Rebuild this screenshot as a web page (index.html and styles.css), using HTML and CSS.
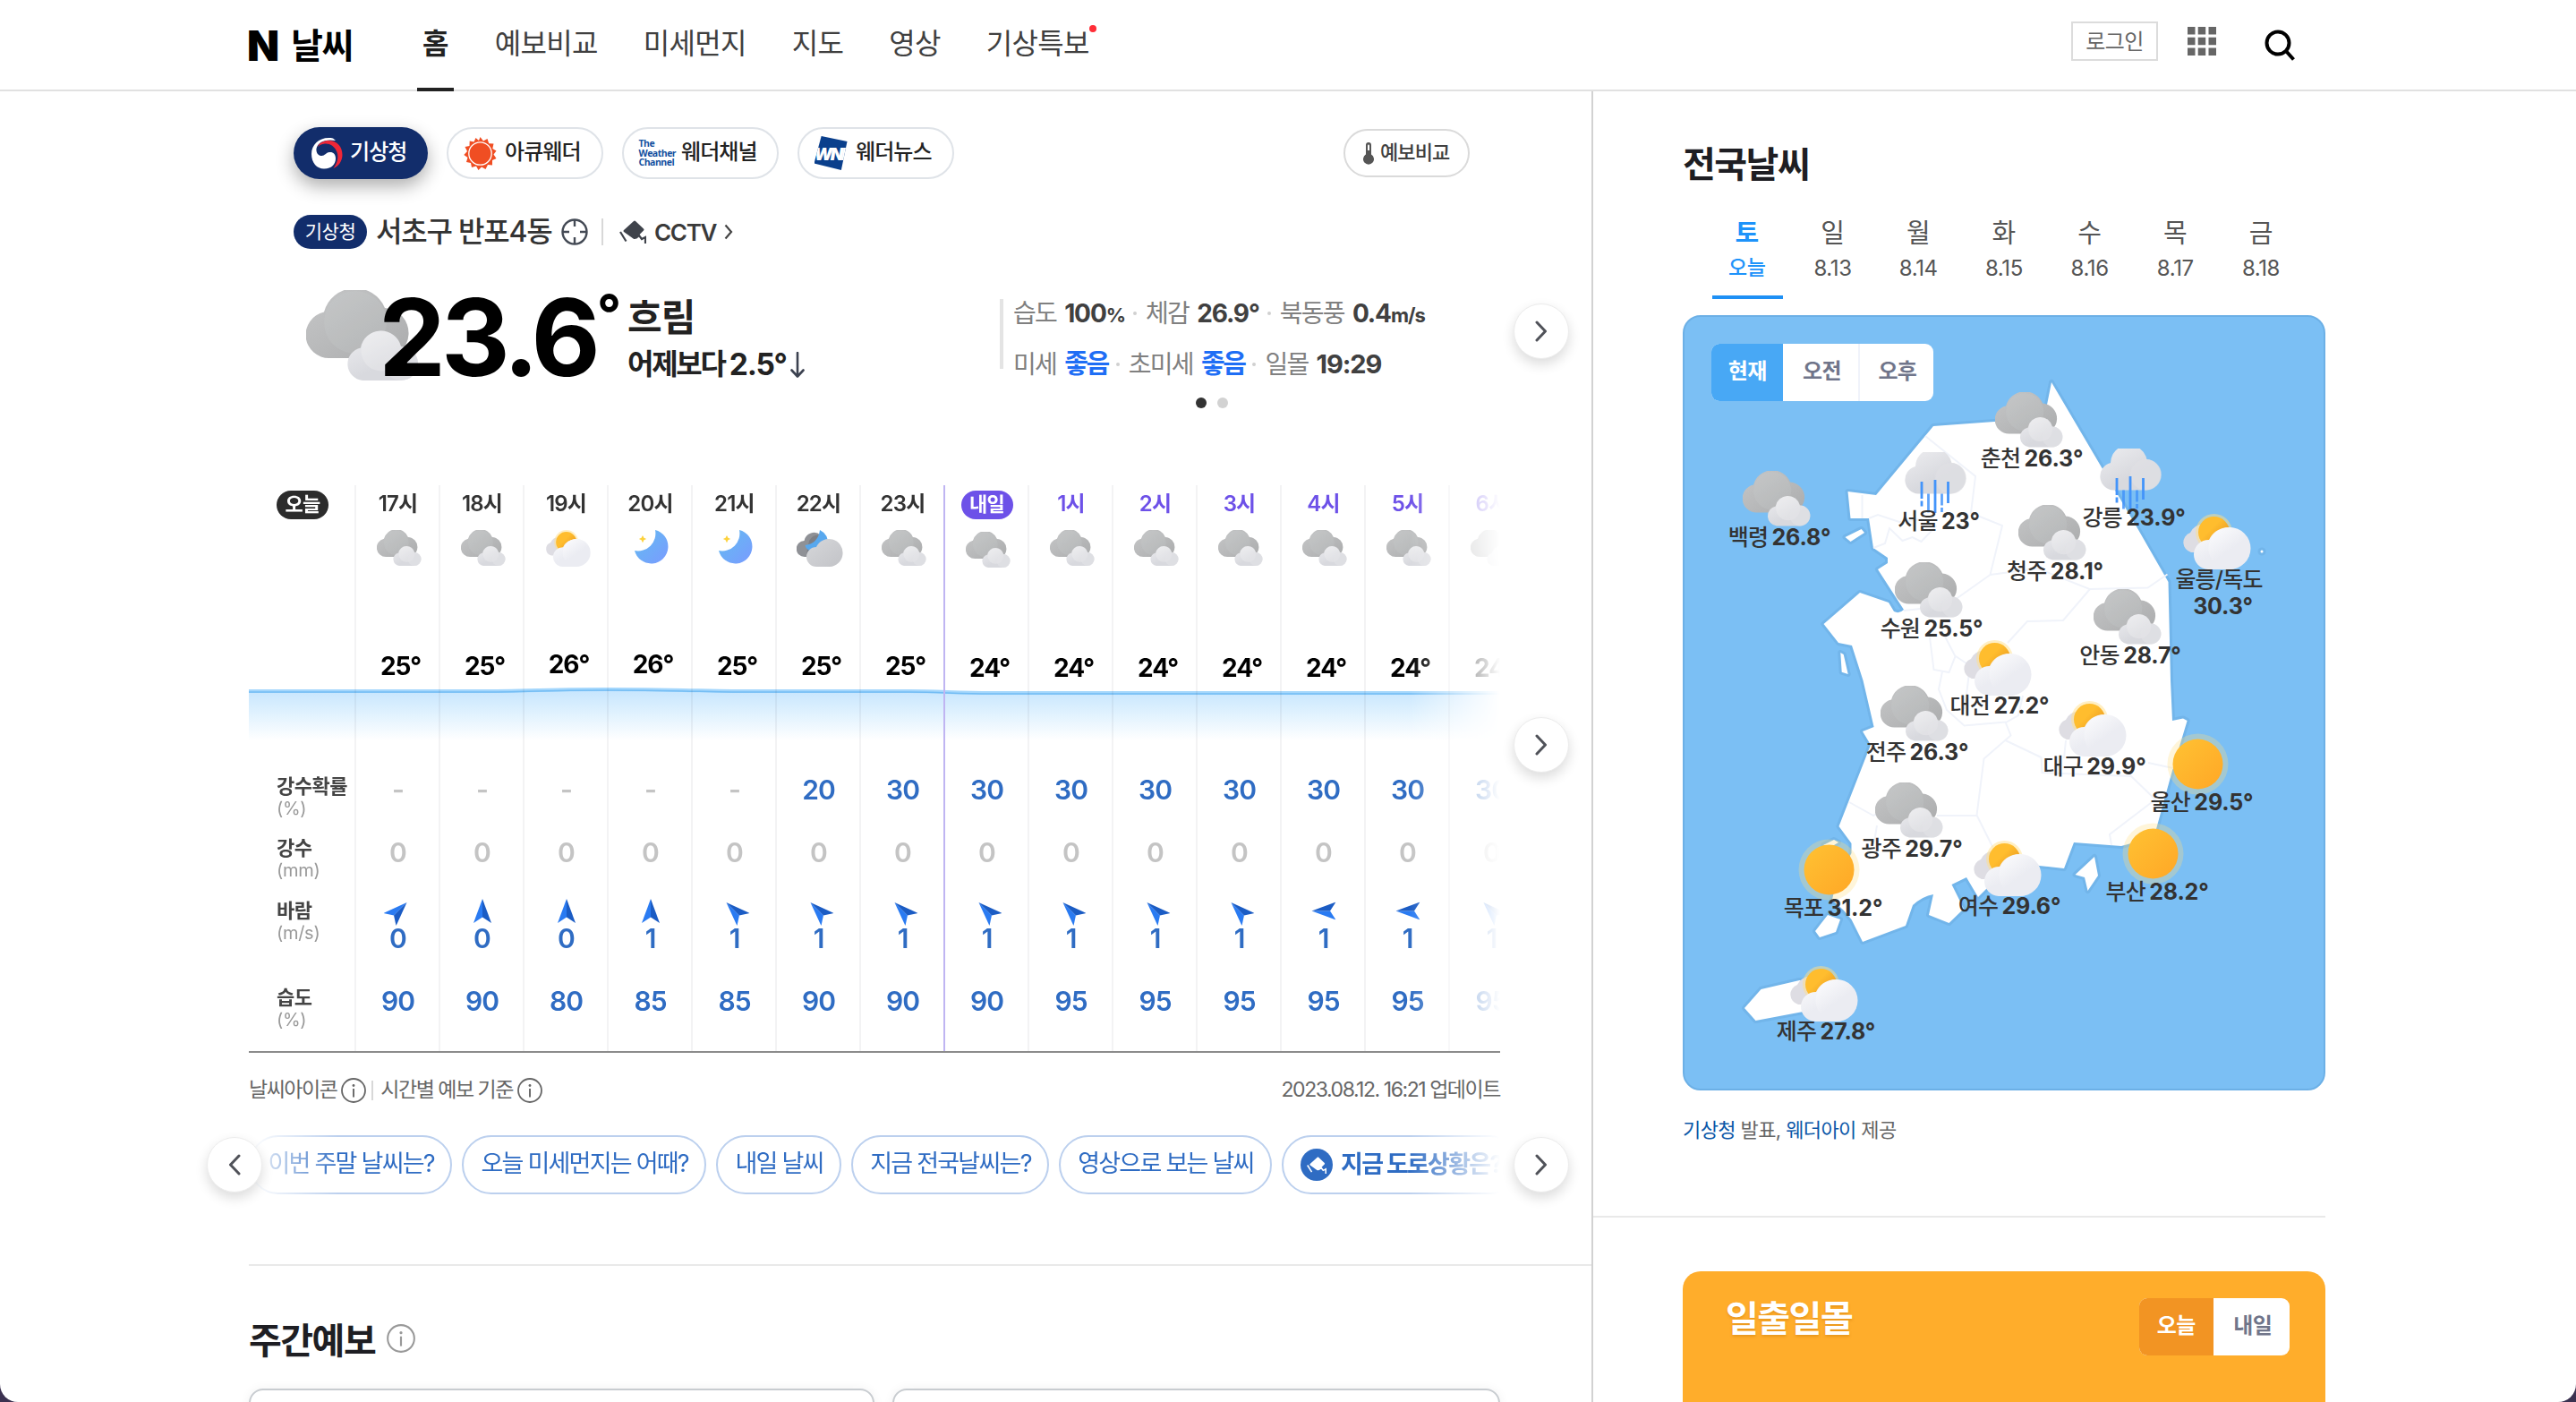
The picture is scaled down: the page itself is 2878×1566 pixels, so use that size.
FILE: index.html
```html
<!DOCTYPE html>
<html lang="ko">
<head>
<meta charset="utf-8">
<title>날씨</title>
<link rel="stylesheet" href="styles.css">
</head>
<body>
<svg class="defs" width="0" height="0" aria-hidden="true">
  <defs>
    <linearGradient id="gGray" x1="0" y1="0" x2="1" y2="1"><stop offset="0" stop-color="#c6c7c8"/><stop offset="1" stop-color="#abacad"/></linearGradient>
    <linearGradient id="gLight" x1="0" y1="0" x2=".7" y2="1"><stop offset="0" stop-color="#eeeef1"/><stop offset=".7" stop-color="#d8d9de"/></linearGradient>
    <linearGradient id="gWhite" x1="0" y1="0" x2=".7" y2="1"><stop offset="0" stop-color="#fdfdfe"/><stop offset=".6" stop-color="#ebecf2"/></linearGradient>
    <linearGradient id="gSun" x1="0" y1="0" x2="1" y2="1"><stop offset="0" stop-color="#ffc233"/><stop offset="1" stop-color="#ffa726"/></linearGradient>
    <linearGradient id="gSunDark" x1="0" y1="0" x2="1" y2="1"><stop offset=".4" stop-color="#ffbd2e"/><stop offset="1" stop-color="#e08a1c"/></linearGradient>
    <linearGradient id="gMoon" x1="0" y1="0" x2="1" y2="1"><stop offset="0" stop-color="#62bdf0"/><stop offset="1" stop-color="#7a9bff"/></linearGradient>
    <linearGradient id="gNight" x1="0" y1="0" x2="1" y2="1"><stop offset="0" stop-color="#d6d7da"/><stop offset="1" stop-color="#c2c3c7"/></linearGradient>
    <linearGradient id="gArea" x1="0" y1="0" x2="0" y2="1"><stop offset="0" stop-color="#c6e5fe"/><stop offset=".4" stop-color="#dcf0fe"/><stop offset="1" stop-color="#ffffff"/></linearGradient>
  </defs>
  <symbol id="cloudy" viewBox="0 0 126 101">
    <path fill="url(#gGray)" d="M26 76a26 26 0 0 1-6-51.4A36 36 0 0 1 88 20a28 28 0 0 1-3 56z"/>
    <circle cx="55" cy="36" r="35" fill="#cfd0d1" opacity=".2"/>
    <path fill="url(#gLight)" d="M63 101a18.500 18.500 0 0 1-2-36.500A23 23 0 0 1 106 63a19 19 0 0 1 0 38z"/>
    <circle cx="84" cy="68" r="22.500" fill="#f4f4f6" opacity=".3"/>
    <circle cx="106" cy="82" r="19" fill="#e3e3e7" opacity=".55"/>
  </symbol>
  <symbol id="partly" viewBox="0 0 79 62">
    <path fill="#dedde3" d="M12 43a11.500 11.500 0 0 1-1-22A15 15 0 0 1 39 22v21z"/>
    <circle cx="37.500" cy="20.500" r="20.500" fill="#ffe08a" opacity=".5"/>
    <circle cx="37.500" cy="20.500" r="17.500" fill="url(#gSunDark)"/>
    <path fill="url(#gWhite)" d="M31 62a16.500 16.500 0 1 1 1-33A23.500 23.500 0 1 1 56 62z"/>
    <circle cx="55" cy="38.500" r="23.500" fill="url(#gWhite)"/>
  </symbol>
  <symbol id="rain" viewBox="0 0 71 68">
    <path fill="url(#gLight)" d="M17 46.500a15.500 15.500 0 0 1-3-30.500A20.500 20.500 0 0 1 54.500 12a17.300 17.300 0 0 1-1 34.500z"/>
    <circle cx="53.500" cy="29.200" r="17.300" fill="#dfe0e4" opacity=".7"/>
    <g stroke="#4394fa" stroke-width="2.800"><path d="M21 33v19M21 54.500v6M36 31v37M50.500 33v24"/><path d="M28.500 46.500v21M43.500 46.500v13M43.500 62v5" opacity=".85"/></g>
  </symbol>
  <symbol id="sun" viewBox="0 0 69 69">
    <circle cx="34.500" cy="34.500" r="34" fill="#ffdf80" opacity=".3"/>
    <circle cx="34.500" cy="34.500" r="28" fill="url(#gSun)"/>
  </symbol>
  <symbol id="moon" viewBox="0 0 38 38">
    <path fill="url(#gMoon)" d="M23 0A19 19 0 1 1 0 23 19.500 19.500 0 0 0 23 0z"/>
    <path fill="#fdd23c" d="M9 6l1.400 2.700L13.200 10l-2.800 1.300L9 14.200l-1.400-2.900L4.800 10l2.800-1.300z"/>
  </symbol>
  <symbol id="nightcloud" viewBox="0 0 52 41">
    <path fill="#8f9196" d="M9 30a9 9 0 0 1-.5-18A11 11 0 0 1 27 6v24z"/>
    <path fill="#7d7f85" d="M14 12q5-8 13-6l-4 13-12 8z"/>
    <path fill="#58a8ee" d="M26 0q10 5 9 17l-12 9Q10 23 9.500 17 24 15 26 0z"/>
    <path fill="url(#gNight)" d="M22 41a11 11 0 1 1 0-22 15.500 15.500 0 1 1 15 22z"/>
  </symbol>
  <symbol id="wind" viewBox="0 0 20 27">
    <path fill="#2a7bf2" d="M10 0v20.500L0 27z"/><path fill="#1b5cc4" d="M10 0v20.500L20 27z"/>
  </symbol>
  <symbol id="info" viewBox="0 0 28 28">
    <circle cx="14" cy="14" r="13" fill="none" stroke="currentColor" stroke-width="1.800"/>
    <circle cx="14" cy="8.500" r="1.400" fill="currentColor"/><path d="M14 12v9.500" stroke="currentColor" stroke-width="1.900"/>
  </symbol>
  <symbol id="next" viewBox="0 0 14 24"><path d="M2 2l9.500 10L2 22" fill="none" stroke="#505259" stroke-width="3" stroke-linecap="round" stroke-linejoin="round"/></symbol>
  <symbol id="camera" viewBox="0 0 30 26">
    <path d="M16 1q1-1 2 0l9 8.500q1 1 0 2l-9 9q-1 1-2.500 0L5 13q-1-1 0-2z"/>
    <path d="M1 13l6.500 10.500" stroke="currentColor" stroke-width="2.200"/><path d="M18 20l4-3 3 4 4-2v7" fill="none" stroke="currentColor" stroke-width="2.200"/>
  </symbol>
</svg>

<div class="page">
<header class="gnb">
  <h1 class="logo"><span class="logo-n">N</span><span>날씨</span></h1>
  <nav class="menu">
    <a class="on">홈</a><a>예보비교</a><a>미세먼지</a><a>지도</a><a>영상</a><a class="new">기상특보</a>
  </nav>
  <div class="tools">
    <a class="login">로그인</a>
    <svg class="apps" viewBox="0 0 32 32" fill="#666"><path d="M0 0h8.500v8.500H0zM11.700 0h8.500v8.500h-8.500zM23.500 0H32v8.500h-8.500zM0 11.700h8.500v8.500H0zM11.700 11.700h8.500v8.500h-8.500zM23.500 11.700H32v8.500h-8.500zM0 23.500h8.500V32H0zM11.700 23.500h8.500V32h-8.500zM23.500 23.500H32V32h-8.500z"/></svg>
    <svg class="search" viewBox="0 0 34 36" fill="none" stroke="#000" stroke-width="4"><circle cx="15" cy="15" r="12.500"/><path d="M24 24l8.500 9.500"/></svg>
  </div>
</header>

<div class="body">
<main class="main">
  <div class="providers">
    <a class="provider on">
      <svg width="35" height="35" viewBox="0 0 35 35"><path fill="#fff" d="M24 .5C10-2 0 7 0 18c0 10 6 16.500 14 16.500 9 0 13-5.500 13-11.500 0-5-3-7.500-7-7-4 .5-5 4-8.500 4C7 20 5 16 5.500 12 7 5 15 1 27 3z"/><path fill="#ee2737" d="M7 10C9 5 14 3 19 3c10 0 15.500 7 15.500 16 0 7-4.500 13-10 15 4.500-6 6-12 4-18C26 9 20 6 15 6.500 11 7 8.500 8 7 10z"/></svg>
      <span>기상청</span></a>
    <a class="provider">
      <svg width="37" height="37" viewBox="-18.500 -18.500 37 37"><path fill="#f04e23" d="M0-18.500L3.500-14 8-16.500 9.700-11.300 15-11 13.800-5.500 18-3 15 1 18 5.500 13.500 7.500 13.500 13 8.500 12.500 6 17.500 1.500 15 -2 18.500-4.500 14-9.500 15.500-10.500 10.500-15.500 9.500-14 4.500-18.200 1.500-14.500-2.500-17-7.500-12-8.500-11.800-14-7-13-5-17.500-1.500-14.500z"/><circle r="12.700" fill="none" stroke="#fff" stroke-width="1.300"/></svg>
      <span>아큐웨더</span></a>
    <a class="provider">
      <span class="twc">The<br>Weather<br>Channel</span>
      <span>웨더채널</span></a>
    <a class="provider">
      <span class="wni">WNI</span>
      <span>웨더뉴스</span></a>
    <a class="compare">
      <svg width="12" height="25" viewBox="0 0 12 25"><path fill="#555" d="M3 3a3 3 0 0 1 6 0v10.500a6 6 0 1 1-6 0z"/><path fill="#fff" d="M5 3.500a1 1 0 0 1 2 0V9H5z"/></svg>
      <span>예보비교</span></a>
  </div>

  <div class="location">
    <span class="badge">기상청</span>
    <strong>서초구 반포4동</strong>
    <svg class="target" viewBox="0 0 30 30" fill="none" stroke="#444a55" stroke-width="2.400"><circle cx="15" cy="15" r="13.500"/><path d="M15 1v8M15 21v8M1 15h8M21 15h8"/></svg>
    <i class="bar"></i>
    <a class="cctv"><svg class="cam" width="30" height="26"><use href="#camera"/></svg>CCTV<svg width="10" height="18" viewBox="0 0 10 18" fill="none" stroke="#444" stroke-width="2.200"><path d="M1.500 1.500L8 9l-6.500 7.500"/></svg></a>
  </div>

  <section class="current">
    <svg class="now-icon"><use href="#cloudy"/></svg>
    <strong class="now-temp">23.6</strong><span class="now-deg">°</span>
    <div class="now-text">
      <b class="now-state">흐림</b>
      <span class="now-diff">어제보다 <em>2.5°</em><svg width="16" height="29" viewBox="0 0 16 29" fill="none" stroke="#3c4250" stroke-width="2.600" stroke-linecap="round" stroke-linejoin="round"><path d="M8 1v26M1.500 20.500L8 27.500l6.500-7"/></svg></span>
    </div>
    <div class="summary">
      <div class="summary-lines">
        <p class="line1"><span>습도</span><b>100<small>%</small></b><i></i><span>체감</span><b>26.9°</b><i></i><span>북동풍</span><b>0.4<small>m/s</small></b></p>
        <p class="line2"><span>미세</span><b class="good">좋음</b><i></i><span>초미세</span><b class="good">좋음</b><i></i><span>일몰</span><b>19:29</b></p>
      </div>
      <div class="dots"><i class="on"></i><i></i></div>
    </div>
    <button class="round r-now"><svg width="14" height="24"><use href="#next"/></svg></button>
  </section>

  <section class="hourly">
    <div class="track">
      <svg class="curve" width="1398" height="80" viewBox="0 0 1398 80">
        <path fill="url(#gArea)" d="M0 13H250C300 13 330 11 400 11C480 11 510 13 540 13H730C770 13 790 15 830 15H1398V68H0z"/>
        <path fill="none" stroke="#a3d6fc" stroke-width="4" d="M0 13H250C300 13 330 11 400 11C480 11 510 13 540 13H730C770 13 790 15 830 15H1398"/>
        <path fill="none" stroke="#74bdf4" stroke-width="1.500" d="M0 14H250C300 14 330 12 400 12C480 12 510 14 540 14H730C770 14 790 16 830 16H1398"/>
      </svg>
      <div class="legend">
        <div class="c-hour"><span class="pill">오늘</span></div>
        <div class="c-icon"></div>
        <div class="c-temp"></div>
        <div class="c-prob">강수확률<small>(%)</small></div>
        <div class="c-rain">강수<small>(mm)</small></div>
        <div class="c-wind">바람<small>(m/s)</small></div>
        <div class="c-hum">습도<small>(%)</small></div>
      </div>
      <div class="hour"><div class="c-hour">17시</div><div class="c-icon"><svg class="cl"><use href="#cloudy"/></svg></div><div class="c-temp t25">25°</div><div class="c-prob none">-</div><div class="c-rain">0</div><div class="c-wind"><svg class="ne"><use href="#wind"/></svg>0</div><div class="c-hum">90</div></div>
      <div class="hour"><div class="c-hour">18시</div><div class="c-icon"><svg class="cl"><use href="#cloudy"/></svg></div><div class="c-temp t25">25°</div><div class="c-prob none">-</div><div class="c-rain">0</div><div class="c-wind"><svg><use href="#wind"/></svg>0</div><div class="c-hum">90</div></div>
      <div class="hour"><div class="c-hour">19시</div><div class="c-icon"><svg class="pt"><use href="#partly"/></svg></div><div class="c-temp t26">26°</div><div class="c-prob none">-</div><div class="c-rain">0</div><div class="c-wind"><svg><use href="#wind"/></svg>0</div><div class="c-hum">80</div></div>
      <div class="hour"><div class="c-hour">20시</div><div class="c-icon"><svg class="mn"><use href="#moon"/></svg></div><div class="c-temp t26">26°</div><div class="c-prob none">-</div><div class="c-rain">0</div><div class="c-wind"><svg><use href="#wind"/></svg>1</div><div class="c-hum">85</div></div>
      <div class="hour"><div class="c-hour">21시</div><div class="c-icon"><svg class="mn"><use href="#moon"/></svg></div><div class="c-temp t25">25°</div><div class="c-prob none">-</div><div class="c-rain">0</div><div class="c-wind"><svg class="nw"><use href="#wind"/></svg>1</div><div class="c-hum">85</div></div>
      <div class="hour"><div class="c-hour">22시</div><div class="c-icon"><svg class="pt"><use href="#nightcloud"/></svg></div><div class="c-temp t25">25°</div><div class="c-prob">20</div><div class="c-rain">0</div><div class="c-wind"><svg class="nw"><use href="#wind"/></svg>1</div><div class="c-hum">90</div></div>
      <div class="hour"><div class="c-hour">23시</div><div class="c-icon"><svg class="cl"><use href="#cloudy"/></svg></div><div class="c-temp t25">25°</div><div class="c-prob">30</div><div class="c-rain">0</div><div class="c-wind"><svg class="nw"><use href="#wind"/></svg>1</div><div class="c-hum">90</div></div>
      <div class="hour next first"><div class="c-hour"><span class="pill">내일</span></div><div class="c-icon"><svg class="cl"><use href="#cloudy"/></svg></div><div class="c-temp t24">24°</div><div class="c-prob">30</div><div class="c-rain">0</div><div class="c-wind"><svg class="nw"><use href="#wind"/></svg>1</div><div class="c-hum">90</div></div>
      <div class="hour next"><div class="c-hour">1시</div><div class="c-icon"><svg class="cl"><use href="#cloudy"/></svg></div><div class="c-temp t24">24°</div><div class="c-prob">30</div><div class="c-rain">0</div><div class="c-wind"><svg class="nw"><use href="#wind"/></svg>1</div><div class="c-hum">95</div></div>
      <div class="hour next"><div class="c-hour">2시</div><div class="c-icon"><svg class="cl"><use href="#cloudy"/></svg></div><div class="c-temp t24">24°</div><div class="c-prob">30</div><div class="c-rain">0</div><div class="c-wind"><svg class="nw"><use href="#wind"/></svg>1</div><div class="c-hum">95</div></div>
      <div class="hour next"><div class="c-hour">3시</div><div class="c-icon"><svg class="cl"><use href="#cloudy"/></svg></div><div class="c-temp t24">24°</div><div class="c-prob">30</div><div class="c-rain">0</div><div class="c-wind"><svg class="nw"><use href="#wind"/></svg>1</div><div class="c-hum">95</div></div>
      <div class="hour next"><div class="c-hour">4시</div><div class="c-icon"><svg class="cl"><use href="#cloudy"/></svg></div><div class="c-temp t24">24°</div><div class="c-prob">30</div><div class="c-rain">0</div><div class="c-wind"><svg class="w"><use href="#wind"/></svg>1</div><div class="c-hum">95</div></div>
      <div class="hour next"><div class="c-hour">5시</div><div class="c-icon"><svg class="cl"><use href="#cloudy"/></svg></div><div class="c-temp t24">24°</div><div class="c-prob">30</div><div class="c-rain">0</div><div class="c-wind"><svg class="w"><use href="#wind"/></svg>1</div><div class="c-hum">95</div></div>
      <div class="hour next"><div class="c-hour">6시</div><div class="c-icon"><svg class="cl"><use href="#cloudy"/></svg></div><div class="c-temp t24">24°</div><div class="c-prob">30</div><div class="c-rain">0</div><div class="c-wind"><svg class="nw"><use href="#wind"/></svg>1</div><div class="c-hum">95</div></div>
    </div>
    <button class="round r-hourly"><svg width="14" height="24"><use href="#next"/></svg></button>
  </section>

  <div class="notes">
    <span>날씨아이콘</span><svg width="28" height="28"><use href="#info"/></svg><i></i><span>시간별 예보 기준</span><svg width="28" height="28"><use href="#info"/></svg>
    <span class="updated">2023.08.12. 16:21 업데이트</span>
  </div>

  <div class="chips">
    <div class="chip-track">
      <a>이번 주말 날씨는?</a><a>오늘 미세먼지는 어때?</a><a>내일 날씨</a><a>지금 전국날씨는?</a><a>영상으로 보는 날씨</a><a class="road"><span class="cam-dot"><svg width="22" height="19"><use href="#camera"/></svg></span>지금 도로상황은?</a>
    </div>
    <button class="round r-prev"><svg width="14" height="24"><use href="#next"/></svg></button>
    <button class="round r-chip"><svg width="14" height="24"><use href="#next"/></svg></button>
  </div>

  <section class="weekly">
    <h2>주간예보<svg width="32" height="32"><use href="#info"/></svg></h2>
    <div class="cards"><div></div><div></div></div>
  </section>
</main>

<aside class="side">
  <h2>전국날씨</h2>
  <ul class="days">
    <li class="on"><b>토</b><span>오늘</span></li><li><b>일</b><span>8.13</span></li><li><b>월</b><span>8.14</span></li><li><b>화</b><span>8.15</span></li><li><b>수</b><span>8.16</span></li><li><b>목</b><span>8.17</span></li><li><b>금</b><span>8.18</span></li>
  </ul>
  <div class="map">
    <svg class="land" width="714" height="862" viewBox="2 2 714 862">
      <g fill="#fff" stroke="#72b5ea" stroke-width="6" stroke-linejoin="round" paint-order="stroke">
        <path d="M412 75L407 100 401 119 348 119 280 124 216 201 184.500 197 187.500 227 208 227 213 260 229 271V277L218 284 247 329Q242 334 236 331L230 321 198 310 157.500 345 174 366 189 369 201.500 408 213.600 460 201 465 210 480 174.500 571 188.500 590V601L172 630 167 653 180 665 188.500 675 201 700 249 682 257 659Q268 649 280 647L275 670 297.500 679 314 663 300.500 636 317 628 330 650 345 635 375 612 380 606 398 615 426 618 437 589 490 593 501 590 529 574 548 505 563.600 453 559 450.500 547 453 545 408 542.500 298 508 238z"/>
        <path d="M199.600 239l3.400 4-15.500 10-6-5zM176.300 377l3.400 2 5 22-7-2.300zM157 592l12-6 5 3-10 6zM162 670l14 5-5 14-18 6-5-7zM460 605l4 21-11.500 17-3.500-15-10.500-3zM69 774l18.500-21 43-10 40 0 10 14-8 8-38 13-53 10z"/>
        <circle cx="647" cy="264" r="1.500"/>
      </g>
      <path fill="none" stroke="#f0f3fa" stroke-width="2" d="M271 135l56 45-5 41 35 14-13.500 55L294 325l-47 5M343.500 290l53-7 58 23 65-1.500 22-15M455 306l-30 35-40 1-22 24M208 227l10-4 24 8 26-3M213 260l13-5 5-17 14.500 14 11-4 10 5 17-18M200.500 201v26M276 360l4.500 36 17 3 7-18-12-23M305 381l15 10M290 398l-4 20 9 23 19.500 17.500 46-4 6 15-30 26-8 63 18 36M328 559h-44M320 400l-5 40M380 425l-5 22-14 8M186 544l27 15 9-4M217 570l-3 18M360.500 475l40 19 1 17 99.500 4 27 26-51 39 2 12M428 475l-2 20M520 500l28 6"/>
    </svg>
    <div class="tabs blue"><b class="on">현재</b><b>오전</b><b>오후</b></div>
    <div class="pin" style="left:391px;top:84px"><svg class="cl"><use href="#cloudy"/></svg><p>춘천 <b>26.3°</b></p></div>
    <div class="pin" style="left:109px;top:172px"><svg class="cl"><use href="#cloudy"/></svg><p>백령 <b>26.8°</b></p></div>
    <div class="pin" style="left:287px;top:154px"><svg class="rn"><use href="#rain"/></svg><p>서울 <b>23°</b></p></div>
    <div class="pin" style="left:505px;top:150px"><svg class="rn"><use href="#rain"/></svg><p>강릉 <b>23.9°</b></p></div>
    <div class="pin" style="left:417px;top:210px"><svg class="cl"><use href="#cloudy"/></svg><p>청주 <b>28.1°</b></p></div>
    <div class="pin two" style="left:600px;top:219px"><svg class="pt"><use href="#partly"/></svg><p>울릉/독도<br><b>30.3°</b></p></div>
    <div class="pin" style="left:279px;top:274px"><svg class="cl"><use href="#cloudy"/></svg><p>수원 <b>25.5°</b></p></div>
    <div class="pin" style="left:501px;top:304px"><svg class="cl"><use href="#cloudy"/></svg><p>안동 <b>28.7°</b></p></div>
    <div class="pin" style="left:355px;top:360px"><svg class="pt"><use href="#partly"/></svg><p>대전 <b>27.2°</b></p></div>
    <div class="pin" style="left:263px;top:412px"><svg class="cl"><use href="#cloudy"/></svg><p>전주 <b>26.3°</b></p></div>
    <div class="pin" style="left:461px;top:428px"><svg class="pt"><use href="#partly"/></svg><p>대구 <b>29.9°</b></p></div>
    <div class="pin" style="left:581px;top:468px"><svg class="sn"><use href="#sun"/></svg><p>울산 <b>29.5°</b></p></div>
    <div class="pin" style="left:257px;top:520px"><svg class="cl"><use href="#cloudy"/></svg><p>광주 <b>29.7°</b></p></div>
    <div class="pin" style="left:531px;top:568px"><svg class="sn"><use href="#sun"/></svg><p>부산 <b>28.2°</b></p></div>
    <div class="pin" style="left:169px;top:586px"><svg class="sn"><use href="#sun"/></svg><p>목포 <b>31.2°</b></p></div>
    <div class="pin" style="left:366px;top:584px"><svg class="pt"><use href="#partly"/></svg><p>여수 <b>29.6°</b></p></div>
    <div class="pin" style="left:161px;top:724px"><svg class="pt"><use href="#partly"/></svg><p>제주 <b>27.8°</b></p></div>
  </div>
  <p class="source"><a>기상청</a> 발표, <a>웨더아이</a> 제공</p>
  <hr>
  <section class="sunrise">
    <h2>일출일몰</h2>
    <div class="tabs orange"><b class="on">오늘</b><b>내일</b></div>
  </section>
</aside>
</div>
</div>
</body>
</html>
```
FILE: styles.css
```css
* { box-sizing: border-box; margin: 0; padding: 0; }
html { background: #3b3150; }
body {
  width: 2878px; height: 1566px; overflow: hidden;
  font-family: Inter, "Noto Sans CJK KR", sans-serif;
  color: #333; -webkit-font-smoothing: antialiased;
}
ul { list-style: none; }
em, i { font-style: normal; }
svg { display: block; flex: none; }
button { border: 0; background: none; }
.defs { position: absolute; }
.page { height: 1566px; overflow: hidden; background: #fff; border-radius: 0 0 20px 20px; }

/* header */
.gnb { display: flex; height: 102px; padding: 0 314px 0 278px; border-bottom: 2px solid #e1e1e1; }
.logo { display: flex; width: 188px; gap: 13px; height: 100px; line-height: 101px; font-size: 39px; font-weight: 700; letter-spacing: -1.500px; color: #000; }
.logo-n { width: 34px; font-size: 47px; font-weight: 900; letter-spacing: 0; margin-left: -2px; margin-right: 2px; }
.menu { display: flex; gap: 51px; height: 102px; }
.menu a { position: relative; height: 102px; line-height: 98px; font-size: 32px; letter-spacing: -.700px; color: #404040; white-space: nowrap; }
.menu .on { padding: 0 6px; margin-right: -5px; border-bottom: 4px solid #222; font-weight: 700; color: #222; }
.menu .new::after { content: ""; position: absolute; right: -8px; top: 28px; width: 8px; height: 8px; border-radius: 50%; background: #ff2d37; }
.tools { display: flex; margin-left: auto; align-items: flex-start; }
.login { width: 97px; height: 44px; margin-top: 24px; border: 2px solid #dcdcdc; line-height: 41px; text-align: center; font-size: 24px; letter-spacing: -.500px; color: #666; }
.apps { width: 32px; height: 32px; margin: 30px 0 0 33px; }
.search { width: 34px; height: 36px; margin: 33px 0 0 54px; }

.body { display: flex; }
.main { width: 1780px; height: 1464px; padding: 40px 0 0 278px; border-right: 2px solid #d2d2d2; }

.providers { display: flex; gap: 20.500px; margin: 0 136px 0 50px; align-items: center; }
.provider { display: flex; align-items: center; width: 175.500px; height: 58px; padding-left: 17px; gap: 9.500px; border: 2px solid #dfe3e8; border-radius: 29px; font-size: 24px; line-height: 30px; font-weight: 500; letter-spacing: -.900px; color: #222; white-space: nowrap; }
.provider span:last-child { margin-top: -3px; }
.provider.on { width: 150px; border: 0; padding-left: 20px; gap: 8px; background: #122d6b; color: #fff; box-shadow: 0 8px 20px rgba(0,0,0,.32); }
.twc { width: 38px; font: 700 10.500px/10.500px "Open Sans", sans-serif; letter-spacing: -.500px; color: #1350a0; }
.wni { width: 37px; height: 38px; background: #0a3f8c; clip-path: polygon(22% 0, 100% 16%, 82% 100%, 0 80%); font: italic 900 19px/42px Inter, sans-serif; letter-spacing: -2.200px; color: #fff; }
.compare { display: flex; align-items: center; gap: 7px; width: 141px; height: 54px; margin-left: auto; padding-left: 20px; border: 2px solid #dadada; border-radius: 27px; font-size: 22px; line-height: 30px; letter-spacing: -.900px; font-weight: 500; color: #404040; white-space: nowrap; }
.compare span { margin-top: -3px; }

.location { display: flex; align-items: center; height: 38px; margin: 40px 0 0 50px; }
.badge { width: 82px; height: 38px; border-radius: 19px; background: #122d6b; color: #fff; text-align: center; font-size: 21px; line-height: 37px; letter-spacing: -.500px; }
.location strong { width: 207px; margin-left: 10px; font-size: 32px; line-height: 38px; font-weight: 500; letter-spacing: -1.200px; white-space: nowrap; }
.target { width: 30px; height: 30px; }
.bar { width: 2px; height: 30px; margin: 0 18px 0 15px; background: #d8d8d8; }
.cctv { display: flex; align-items: center; font-size: 26px; font-weight: 600; letter-spacing: -1.300px; color: #3a3a3a; }
.cam { margin-right: 9px; color: #3f434b; fill: currentColor; }
.cctv svg:last-child { margin-left: 9px; }

/* current conditions */
.current { position: relative; display: flex; height: 218px; margin-top: 46px; padding-left: 64px; align-items: flex-start; }
.now-icon { width: 126px; height: 101px; }
.now-temp { position: relative; width: 244px; margin: 3px 0 0 -45px; line-height: 100px; font-size: 119px; font-weight: 650; letter-spacing: -5px; color: #000; white-space: nowrap; }
.now-deg { width: 34px; margin: -4px 0 0 0; font-size: 59px; line-height: 60px; font-weight: 700; color: #000; }
.now-text { width: 416px; }
.now-state { display: block; margin-top: 6px; font-size: 42px; line-height: 50px; letter-spacing: -1px; color: #222; }
.now-diff { display: flex; align-items: center; margin-top: 9px; font-size: 32px; line-height: 36px; font-weight: 700; letter-spacing: -2.300px; color: #222; white-space: pre; }
.now-diff em { font-size: 33.500px; letter-spacing: -1.200px; }
.now-diff svg { margin-left: 4px; }
.summary-lines { height: 78px; margin-top: 10px; padding-left: 11px; border-left: 4px solid #e4e4e4; }
.summary p { display: flex; align-items: baseline; line-height: 34px; height: 34px; font-size: 28px; letter-spacing: -1.700px; color: #808080; white-space: nowrap; }
.summary .line1 { transform: translateY(-1px); }
.summary .line2 { margin-top: 22px; }
.summary b { margin-left: 9px; font-weight: 700; color: #404040; letter-spacing: -1.100px; }
.summary .line2 b { font-size: 29px; }
.summary small { font-size: 22px; letter-spacing: -1px; }
.summary .good { color: #1f6ef5; letter-spacing: -2.400px; }
.summary p i { width: 4px; height: 4px; margin: 0 10px 0 9px; align-self: center; border-radius: 50%; background: #d0d0d0; }
.dots { display: flex; gap: 12px; margin: 32px 0 0 219px; }
.dots i { width: 12px; height: 12px; border-radius: 50%; background: #d2d2d2; }
.dots .on { background: #333; }

.round { position: absolute; display: flex; align-items: center; justify-content: center; width: 62px; height: 62px; border-radius: 50%; background: #fff; border: 1px solid #ececec; box-shadow: 0 6px 14px rgba(0,0,0,.14); }
.r-now { left: 1413px; top: 15px; }
.r-hourly { left: 1413px; top: 259px; }
.r-prev { left: -47px; top: 2px; transform: scaleX(-1); }
.r-chip { left: 1413px; top: 2px; }

/* hourly forecast */
.hourly { position: relative; width: 1398px; height: 634px; border-bottom: 2px solid #8c8c8c; }
.track { position: relative; display: flex; width: 1398px; height: 632px; overflow: hidden; -webkit-mask-image: linear-gradient(90deg, #000 1296px, transparent 1398px); mask-image: linear-gradient(90deg, #000 1296px, transparent 1398px); }
.curve { position: absolute; left: 0; top: 217px; }
.legend { flex: none; width: 118px; padding-left: 31px; font-size: 22px; line-height: 26px; font-weight: 600; letter-spacing: -.500px; color: #444; }
.legend small { display: block; font-size: 20px; line-height: 24px; font-weight: 400; letter-spacing: -.300px; color: #999; }
.legend .c-prob { padding-top: 29px; }
.legend .c-rain { padding-top: 4px; }
.legend .c-wind { padding-top: 28px; }
.legend .c-hum { padding-top: 36px; }
.hour { position: relative; flex: none; width: 94px; border-left: 2px solid rgba(30,40,60,.055); padding-left: 1px; text-align: center; font-weight: 560; font-size: 30px; letter-spacing: -1px; color: #2f6cc3; }
.hour.first { border-left-color: #c0b5f2; }
.c-hour { height: 43px; line-height: 42px; font-size: 24px; font-weight: 600; letter-spacing: -.800px; color: #333; }
.next .c-hour { color: #6d51e8; }
.pill { display: inline-block; width: 58px; height: 32px; margin-top: 6px; border-radius: 16px; background: #2c2c2c; color: #fff; text-align: center; font-size: 22px; line-height: 30px; font-weight: 700; vertical-align: top; }
.next .pill { background: #6d51e8; }
.c-icon { display: flex; height: 54px; padding-left: 2px; align-items: center; justify-content: center; }
.c-icon .cl { width: 50px; height: 40px; }
.first .c-icon .cl { margin-top: 4px; }
.c-icon .pt { width: 52px; height: 41px; }
.c-icon .mn { width: 38px; height: 38px; margin-top: -2px; }
.c-temp { height: 197px; line-height: 30px; padding-left: 6px; font-size: 28px; font-weight: 700; letter-spacing: -1px; color: #000; }
.t25 { padding-top: 90px; }
.t26 { padding-top: 88px; }
.t24 { padding-top: 92px; }
.c-prob { height: 94px; }
.hour .c-prob { line-height: 93px; }
.c-rain { height: 46px; }
.hour .c-rain, .c-prob.none { color: #c4c4c4; }
.hour .c-rain { line-height: 45px; }
.c-wind { height: 89px; padding-top: 28px; }
.hour .c-wind { line-height: 34px; }
.c-wind svg { width: 20px; height: 27px; margin: 0 auto; }
.ne { transform: rotate(45deg); }
.nw { transform: rotate(-45deg); }
.w { transform: rotate(-90deg); }
.c-hum { height: 108px; }
.hour .c-hum { line-height: 107px; }

.notes { display: flex; align-items: center; height: 28px; margin-top: 28px; width: 1398px; font-size: 23px; line-height: 26px; letter-spacing: -1.500px; color: #666; white-space: nowrap; }
.notes span { margin-top: -2px; }
.notes svg { margin-left: 5px; color: #666; }
.notes i { width: 2px; height: 22px; margin: 0 8px 0 6px; background: #d8d8d8; }
.notes .updated { margin-left: auto; letter-spacing: -1.450px; }

.chips { position: relative; margin-top: 36px; height: 66px; }
.chip-track { display: flex; gap: 10.500px; width: 1398px; overflow: hidden; -webkit-mask-image: linear-gradient(90deg, transparent 0, #000 100px, #000 1296px, transparent); mask-image: linear-gradient(90deg, transparent 0, #000 100px, #000 1296px, transparent); }
.chip-track a { flex: none; height: 66px; padding: 0 18.500px 0 19.500px; border: 2px solid #bcd0ee; border-radius: 33px; font-size: 27px; line-height: 60px; letter-spacing: -1.750px; color: #2f6cc3; white-space: nowrap; }
.chip-track .road { display: flex; align-items: center; font-weight: 700; }
.cam-dot { display: flex; align-items: center; justify-content: center; width: 36px; height: 36px; margin-right: 9px; border-radius: 50%; background: #2f6cc3; color: #fff; fill: #fff; }

.weekly { margin-top: 78px; border-top: 2px solid #e9e9e9; }
.weekly h2 { display: flex; align-items: center; gap: 13px; height: 56px; margin-top: 53px; }
.weekly h2 svg { color: #999; }
h2 { font-size: 40px; font-weight: 700; letter-spacing: -1.500px; color: #1e1e23; white-space: nowrap; }
.cards { display: flex; gap: 20px; width: 1398px; margin-top: 28px; }
.cards div { flex: 1; height: 100px; border: 2px solid #c8ccd0; border-radius: 16px; box-shadow: 0 0 12px rgba(0,0,0,.06); }
.cards div:first-child { flex: none; width: 699px; }

/* sidebar */
.side { width: 818px; padding-top: 52px; }
.side > h2 { margin-left: 100px; height: 60px; line-height: 60px; }
.days { display: flex; margin: 22px 0 0 124px; }
.days li { width: 95.700px; height: 98px; padding-top: 6px; text-align: center; }
.days b { display: block; height: 36px; line-height: 37px; font-size: 29px; font-weight: 400; color: #555; }
.days span { display: block; height: 44px; line-height: 43px; font-size: 24px; letter-spacing: -.400px; color: #555; }
.days .on { position: relative; }
.days .on::after { content: ""; position: absolute; left: 9px; right: 8px; bottom: 0; height: 4px; background: #1e90f5; }
.days .on b, .days .on span { color: #1e93fa; font-weight: 500; }
.days .on span { font-size: 23px; }
.days .on b { font-weight: 700; }
.map { position: relative; width: 718px; height: 866px; margin: 18px 0 0 100px; border: 2px solid #6cb0e6; border-radius: 20px; background: #7bbff4; overflow: hidden; }
.land { position: absolute; left: 0; top: 0; }
.tabs { display: flex; width: 248px; height: 64px; border-radius: 9px; overflow: hidden; background: #fff; text-align: center; font-size: 24px; line-height: 62px; letter-spacing: -.700px; color: #70758a; }
.tabs b { flex: 1; font-weight: 600; }
.tabs b + b { padding-left: 3px; }
.tabs b + b + b { border-left: 2px solid #f0f3fa; padding-left: 2px; }
.tabs .on { color: #fff; font-weight: 700; }
.blue { position: relative; margin: 30px 0 0 30px; }
.blue .on { background: #48a8f5; }
.pin { position: absolute; width: 160px; margin: -3px 0 0 -82px; text-align: center; }
.pin svg { margin: 0 auto; position: relative; left: -4px; }
.pin .cl { width: 76px; height: 62px; margin-top: 3px; margin-bottom: 1px; }
.pin .pt { width: 79px; height: 62px; margin-top: 4px; left: -5px; }
.pin .rn { width: 71px; height: 68px; margin-bottom: -2px; left: -6px; }
.pin .sn { width: 69px; height: 69px; margin-bottom: -3px; left: -6px; }
.pin p { position: relative; left: -1px; line-height: 23px; font-size: 25px; font-weight: 500; letter-spacing: -.800px; word-spacing: -1.500px; color: #333; white-space: nowrap; }
.pin.two p { line-height: 30px; margin-top: -4px; }
.pin.two b { margin-left: 9px; }
.pin b { font-weight: 700; letter-spacing: -.150px; }
.source { margin: 31px 0 0 100px; height: 28px; line-height: 27px; font-size: 22px; letter-spacing: -.600px; color: #666; }
.source a { color: #0b57a8; }
hr { border: 0; height: 2px; margin-top: 81px; background: #e9e9e9; }
.sunrise { display: flex; justify-content: space-between; width: 718px; height: 200px; margin: 60px 0 0 100px; padding: 30px 40px 0 48px; border-radius: 20px; background: #ffad2b; }
.sunrise h2 { height: 46px; line-height: 45px; color: #fff; text-shadow: 0 2px 3px rgba(190,110,0,.35); }
.orange { width: 168px; }
.orange .on { background: #f29423; }
```
